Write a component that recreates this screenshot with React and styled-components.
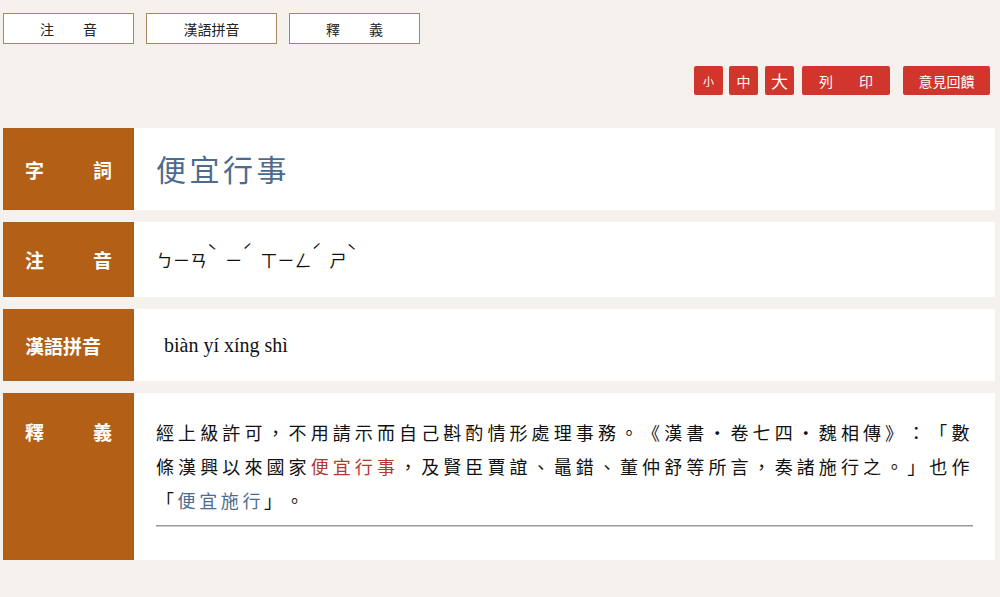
import React from 'react';
import styled, { createGlobalStyle } from 'styled-components';

const GlobalStyle = createGlobalStyle`
    html, body {
        margin: 0;
        padding: 0;
        background: #f5f1ed;
    }
    body {
        font-family: "Liberation Sans", "Noto Sans CJK TC", sans-serif;
    }
`

const Page = styled.div`
    width: 1000px;
    height: 597px;
    overflow: hidden;
    padding: 13px 5px 0 3px;
    box-sizing: border-box;
    background: #f5f1ed;
`

const TopBar = styled.div`
    display: flex;
    gap: 12px;
`

const TabButton = styled.div`
    width: 131px;
    height: 31px;
    box-sizing: border-box;
    border: 1.5px solid #a8895f;
    background: #fff;
    display: flex;
    align-items: center;
    justify-content: ${p => (p.$spread ? 'space-between' : 'center')};
    padding: 0 36px;
    font-size: 14px;
    color: #222;
    font-family: "Noto Sans CJK TC", sans-serif;
`

const ToolBar = styled.div`
    display: flex;
    justify-content: flex-end;
    align-items: center;
    margin-top: 22px;
    padding-right: 5px;
    height: 29px;
`

const RedButton = styled.div`
    height: 29px;
    width: ${p => p.$w}px;
    margin-left: ${p => p.$gap || 0}px;
    box-sizing: border-box;
    background: #d1352c;
    color: #fff;
    border-radius: 2px;
    display: flex;
    align-items: center;
    justify-content: ${p => (p.$spread ? 'space-between' : 'center')};
    padding: ${p => (p.$spread ? '0 17px' : '0')};
    font-size: ${p => p.$fs || 14}px;
    font-family: "Noto Sans CJK TC", sans-serif;
`

const Rows = styled.div`
    margin-top: 33px;
    display: flex;
    flex-direction: column;
    gap: 12px;
`

const Row = styled.div`
    display: flex;
    min-height: ${p => p.$h}px;
`

const Label = styled.div`
    width: 131px;
    flex-shrink: 0;
    box-sizing: border-box;
    background: #b35f16;
    border: 1px solid #a9601f;
    color: #fff;
    font-weight: bold;
    font-size: 19px;
    font-family: "Noto Sans CJK TC", sans-serif;
    padding: ${p => (p.$top ? '24px 21px 0' : '0 21px')};
    display: flex;
    align-items: ${p => (p.$top ? 'flex-start' : 'center')};
    justify-content: space-between;
`

const Content = styled.div`
    flex: 1;
    background: #fff;
    display: flex;
    align-items: center;
    padding: 0 22px;
    box-sizing: border-box;
`

const Headword = styled.div`
    font-family: "Noto Sans CJK TC", serif;
    font-size: 30px;
    letter-spacing: 3.5px;
    color: #4d6b8e;
    margin-top: -2px;
`

const Zhuyin = styled.div`
    display: flex;
    gap: 16px;
    font-family: "Noto Sans CJK TC", sans-serif;
    font-size: 17px;
    color: #111;
`

const Syllable = styled.span`
    display: inline-flex;
    align-items: flex-start;
`

const Tone = styled.span`
    font-size: 17px;
    line-height: 1;
    margin-top: -5px;
    margin-left: 0;
    margin-right: -8px;
`

const Pinyin = styled.div`
    font-family: "Liberation Serif", serif;
    font-size: 20px;
    color: #111;
    padding-left: 8px;
`

const DefContent = styled.div`
    flex: 1;
    background: #fff;
    padding: 22px 22px 33px;
    box-sizing: border-box;
`

const DefText = styled.p`
    margin: 0;
    font-family: "Noto Sans CJK TC", serif;
    font-size: 18px;
    letter-spacing: 3.6px;
    line-height: 34px;
    color: #111;
    text-spacing-trim: space-all;
`

const Line = styled.span`
    display: block;
    text-align: justify;
    text-align-last: ${p => (p.$full ? 'justify' : 'left')};
`

const Word = styled.span`
    color: ${p => p.$c};
`

const Rule = styled.div`
    margin-top: 8px;
    height: 1px;
    background: #999;
    border-bottom: 1px solid #ccc;
`

const Spread = ({ text }) => [...text].map((c, i) => <span key={i}>{c}</span>)

const zhuyin = [
    ['ㄅㄧㄢ', 'ˋ'],
    ['ㄧ', 'ˊ'],
    ['ㄒㄧㄥ', 'ˊ'],
    ['ㄕ', 'ˋ'],
]

function App() {
    return (
        <Page>
            <GlobalStyle />
            <TopBar>
                <TabButton $spread><Spread text="注音" /></TabButton>
                <TabButton>漢語拼音</TabButton>
                <TabButton $spread><Spread text="釋義" /></TabButton>
            </TopBar>

            <ToolBar>
                <RedButton $w={29} $fs={11}>小</RedButton>
                <RedButton $w={29} $gap={6} $fs={14}>中</RedButton>
                <RedButton $w={29} $gap={7} $fs={17}>大</RedButton>
                <RedButton $w={88} $gap={8} $spread><Spread text="列印" /></RedButton>
                <RedButton $w={87} $gap={13}>意見回饋</RedButton>
            </ToolBar>

            <Rows>
                <Row $h={82}>
                    <Label><Spread text="字詞" /></Label>
                    <Content><Headword>便宜行事</Headword></Content>
                </Row>
                <Row $h={75}>
                    <Label><Spread text="注音" /></Label>
                    <Content>
                        <Zhuyin>
                            {zhuyin.map(([s, t], i) => (
                                <Syllable key={i}>{s}<Tone>{t}</Tone></Syllable>
                            ))}
                        </Zhuyin>
                    </Content>
                </Row>
                <Row $h={72}>
                    <Label>漢語拼音</Label>
                    <Content><Pinyin>biàn yí xíng shì</Pinyin></Content>
                </Row>
                <Row $h={166}>
                    <Label $top><Spread text="釋義" /></Label>
                    <DefContent>
                        <DefText>
                            <Line $full>經上級許可，不用請示而自己斟酌情形處理事務。《漢書・卷七四・魏相傳》：「數</Line>
                            <Line $full>
                                條漢興以來國家<Word $c="#b03a30">便宜行事</Word>，及賢臣賈誼、鼂錯、董仲舒等所言，奏諸施行之。」也作
                            </Line>
                            <Line>「<Word $c="#4d6b8e">便宜施行</Word>」。</Line>
                        </DefText>
                        <Rule />
                    </DefContent>
                </Row>
            </Rows>
        </Page>
    )
}

export default App
